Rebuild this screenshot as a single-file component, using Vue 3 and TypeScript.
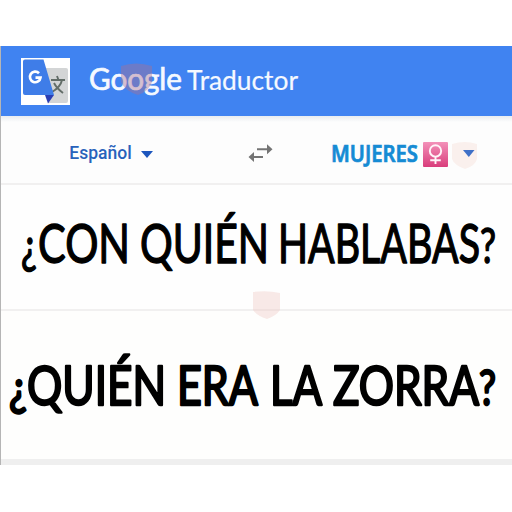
<script lang="ts" setup>
  interface Word {
    text: string
    x: number
    width: number
    size?: number
  }

  interface Phrase {
    id: string
    baseline: number
    words: Word[]
  }

  // word positions are relative to each panel's own svg
  const phrases: Phrase[] = [
    {
      id: 'source',
      baseline: 78,
      words: [
        { text: '¿', x: 21, width: 16, size: 48 },
        { text: 'CON', x: 38, width: 92 },
        { text: 'QUIÉN', x: 140, width: 129 },
        { text: 'HABLABAS', x: 278, width: 202 },
        { text: '?', x: 480, width: 16, size: 48 },
      ],
    },
    {
      id: 'result',
      baseline: 94,
      words: [
        { text: '¿', x: 9, width: 18, size: 48 },
        { text: 'QUIÉN', x: 27, width: 139 },
        { text: 'ERA', x: 177, width: 81 },
        { text: 'LA', x: 270, width: 52 },
        { text: 'ZORRA', x: 333, width: 146 },
        { text: '?', x: 479, width: 17, size: 48 },
      ],
    },
  ]
</script>

<template>
  <main class="page">
    <section class="translator">
      <header class="header">
        <svg class="logo" viewBox="0 0 49 47">
          <path fill="#fff" d="M0 0h49v47H0z" />
          <path fill="#d3d5d6" d="M22 10h23a2 2 0 0 1 2 2v31a2 2 0 0 1-2 2H27z" />
          <path d="M30 22h14M36 18l1.500 4M41 22c-1 5-5 9-10 12M33 25c2 4 5 7 9 10" fill="none" stroke="#626d68" stroke-width="1.900" />
          <path fill="#2b3fb4" d="M24 37h9l-6 8.500z" />
          <path fill="#3f7de8" d="M4 1.500h18.500L33 37H4a2 2 0 0 1-2-2V3.500a2 2 0 0 1 2-2z" />
          <path d="M18 15.200A5.300 5.300 0 1 0 19.500 19.600H14.500" fill="none" stroke="#fff" stroke-width="2.700" />
        </svg>
        <svg class="brand" viewBox="0 0 230 70">
          <text class="google" x="19" y="43.500" textLength="93" lengthAdjust="spacingAndGlyphs">Google</text>
          <text class="product" x="117" y="43.500" textLength="111" lengthAdjust="spacingAndGlyphs">Traductor</text>
          <path class="brand-mark" d="M51 20q15-5 31 0v16q-3 9-14 13-13-4-17-13z" />
        </svg>
      </header>

      <nav class="languages">
        <button class="language source">
          <span>Español</span>
          <svg class="arrow" viewBox="0 0 12 7"><path d="M0 0h12L6 7z" /></svg>
        </button>
        <svg class="swap" viewBox="0 0 25 20">
          <path d="M9 6.300h12M4 14h11" fill="none" stroke="#747474" stroke-width="2" />
          <path d="M19 1.300l5.500 5-5.500 5zM6 9L.5 14 6 19z" fill="#747474" />
        </svg>
        <button class="language target">
          <svg class="women" viewBox="0 0 87 34">
            <text x="0" y="26" textLength="87" lengthAdjust="spacingAndGlyphs">MUJERES</text>
          </svg>
          <svg class="female" viewBox="0 0 26 26">
            <defs>
              <linearGradient id="pink" x2="0" y2="1">
                <stop offset="0" stop-color="#f391b9" />
                <stop offset="1" stop-color="#d93d7b" />
              </linearGradient>
            </defs>
            <rect width="26" height="26" rx="1" fill="url(#pink)" />
            <g fill="none" stroke="#fff4f8" stroke-width="2">
              <circle cx="13" cy="9.300" r="5.900" />
              <path d="M13 15v8M7.500 19h11" />
            </g>
          </svg>
          <svg class="target-arrow" viewBox="0 0 28 28">
            <path fill="#faf0ed" d="M1 2q13-4 25 0v15q-2 7-12 10Q3 23 1 17z" />
            <path fill="#3f70c7" d="M12 8h11.500l-5.700 7z" />
          </svg>
        </button>
      </nav>

      <article v-for="phrase in phrases" :key="phrase.id" class="phrase" :class="phrase.id">
        <svg class="phrase-text" width="511" height="124">
          <text
            v-for="word in phrase.words"
            :key="word.text"
            :x="word.x - 1"
            :y="phrase.baseline"
            :textLength="word.width"
            :font-size="word.size ?? 53.5"
            lengthAdjust="spacingAndGlyphs"
          >{{ word.text }}</text>
        </svg>
      </article>
      <svg class="mark" viewBox="0 0 28 29"><path d="M0 1q14-2 27 1v17q-4 6-13 9Q4 25 0 19z" /></svg>
      <footer class="footer"></footer>
    </section>
  </main>
</template>

<style>
  body {
    background: #fff;
  }
</style>

<style scoped>
  .page {
    box-sizing: border-box;
    height: 512px;
    padding-top: 46px;
  }

  .translator {
    position: relative;
    box-sizing: border-box;
    height: 419px;
    display: flex;
    flex-direction: column;
    border-left: 1px solid #b5b5b5;
    background: #fefefe;
  }

  svg {
    display: block;
    flex-shrink: 0;
    overflow: visible;
  }

  .header {
    height: 70px;
    flex-shrink: 0;
    display: flex;
    align-items: center;
    padding-left: 20px;
    background: #4083f1;
  }

  .logo {
    width: 49px;
    height: 47px;
  }

  .brand {
    width: 230px;
    height: 70px;
  }

  .google,
  .product {
    font-family: Lato, sans-serif;
    fill: #f5f9ff;
  }

  .google {
    font-size: 30px;
    stroke: #f5f9ff;
    stroke-width: 0.7px;
  }

  .product {
    font-size: 26px;
    stroke: #f5f9ff;
    stroke-width: 0.2px;
  }

  .brand-mark {
    fill: #a9708f;
    opacity: 0.42;
  }

  .languages {
    box-sizing: border-box;
    height: 69px;
    flex-shrink: 0;
    display: flex;
    align-items: center;
    padding: 6px 32px 0 68px;
    border-bottom: 2px solid #f1f0f0;
    background: linear-gradient(#e8ecf0, #fdfdfd 6px);
  }

  .language {
    display: flex;
    align-items: center;
    padding: 0;
    border: 0;
    background: none;
  }

  .source span {
    width: 63px;
    color: #2862bb;
    font: 500 17.5px Roboto, sans-serif;
  }

  .source .arrow {
    width: 12px;
    height: 7px;
    margin: 3px 0 0 9px;
    fill: #1d56bd;
  }

  .swap {
    width: 25px;
    height: 20px;
    margin-left: 95px;
  }

  .target {
    margin-left: 58px;
  }

  .women {
    width: 87px;
    height: 34px;
    font: 600 23px "Noto Sans", sans-serif;
    fill: #168bd4;
    stroke: #168bd4;
    stroke-width: 0.7px;
  }

  .female {
    width: 25px;
    height: 25px;
    margin: 3px 0 0 5px;
  }

  .target-arrow {
    width: 28px;
    height: 28px;
    margin: 7px 0 0 3px;
  }

  .phrase {
    box-sizing: border-box;
    height: 126px;
    flex-shrink: 0;
    border-bottom: 2px solid #f1f0f0;
  }

  .phrase.result {
    height: 148px;
    border: 0;
    background: #fefefd;
  }

  .phrase-text {
    font-family: Lato, sans-serif;
    fill: #000;
    stroke: #000;
    stroke-width: 1.4px;
    stroke-linejoin: round;
  }

  .result .phrase-text {
    stroke-width: 2.4px;
  }

  .mark {
    position: absolute;
    left: 252px;
    top: 245px;
    width: 28px;
    height: 29px;
    fill: #efc5c0;
    opacity: 0.36;
  }

  .footer {
    height: 6px;
    background: #efefef;
  }
</style>
